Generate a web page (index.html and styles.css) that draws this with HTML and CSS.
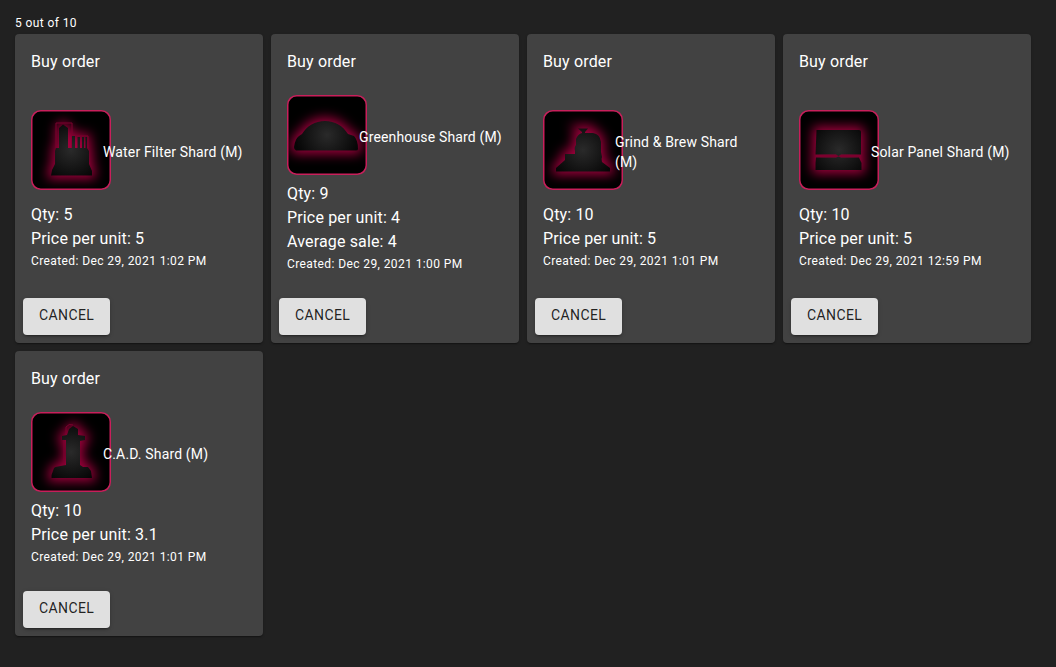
FILE: index.html
```html
<!DOCTYPE html>
<html lang="en">
<head>
<meta charset="utf-8">
<meta name="viewport" content="width=device-width, initial-scale=1">
<title>Orders</title>
<link rel="stylesheet" href="styles.css">
</head>
<body>
<svg class="defs" width="0" height="0" aria-hidden="true">
  <defs>
    <filter id="halo" x="-60%" y="-60%" width="220%" height="220%" color-interpolation-filters="sRGB"><feGaussianBlur stdDeviation="6"/></filter>
    <filter id="soft" x="-20%" y="-20%" width="140%" height="140%" color-interpolation-filters="sRGB"><feGaussianBlur stdDeviation="0.6"/></filter>
    <radialGradient id="body" gradientUnits="userSpaceOnUse" cx="40" cy="40" r="32">
      <stop offset="0" stop-color="#2a2a2a"/><stop offset="1" stop-color="#060606"/>
    </radialGradient>
    <path id="filter-shape" d="M20 65.5 L21 60 L24 54 V41 L25 38 H28 V18 L32 14.500 L37 18 V38 H41 V26 H44 V38 H46.500 V27 H49 V38 H51 V27 H53 V38 H54.500 V27 H56 V38 L58 41 V54 L61 61 V65.5 Z"/>
    <path id="greenhouse-shape" d="M9 55.5 Q7 55 7 52 Q8 44 12 41 L15 39 C20 31 28 26 38 26 C48 26 56 31 61 39 L67 41 Q71 45 71 54 Q71 55.500 69 55.500 Z"/>
    <path id="grind-shape" d="M13 61.5 V58 L22 50 V44 H32 V41 Q31 37 33 35 V29 Q35 24 39 23 V22 L35 18.500 H45 L42 22 V23 H50 Q57 24 58 32 V42 L59 47 Q58 49 59 52 L67 58 V61.500 Z"/>
    <path id="solar-shape" d="M17.500 20 H60 Q62 20 62 22 V44.500 H42 L39.500 46 L37 44.500 H16.500 Z M17 47.500 H37 L39.500 46.500 L42 47.500 H60 L62.500 53 V60 H16.500 V53 Z"/>
    <path id="cad-shape" d="M20.500 66 V63 L23 56 Q24 54.500 27 54.500 L35 53 V28 H31 V24 L36 23 L38 17 L42 14 L47 17 V23 L54 24 V28 L49 29 V53 L52 55 H57 L60 59 L61 66 Z"/>
  </defs>
</svg>

<main class="page">
  <p class="count">5 out of 10</p>
  <div class="orders">

    <article class="card">
      <h2 class="card-title">Buy order</h2>
      <div class="card-content">
        <div class="item">
          <svg class="item-icon" viewBox="0 0 80 80" aria-hidden="true">
            <rect class="tile" x="0.75" y="0.75" width="78.5" height="78.5" rx="9"/>
            <use class="halo" href="#filter-shape"/>
            <path class="wire" d="M25 38V13H41V25M41 38V26H57V38"/>
            <use class="shape" href="#filter-shape"/>
          </svg>
          <span class="item-name">Water Filter Shard (M)</span>
        </div>
        <div class="details">
          <p class="line">Qty: 5</p>
          <p class="line">Price per unit: 5</p>
          <p class="created">Created: Dec 29, 2021 1:02 PM</p>
        </div>
      </div>
      <div class="actions"><button class="button" type="button">CANCEL</button></div>
    </article>

    <article class="card">
      <h2 class="card-title">Buy order</h2>
      <div class="card-content">
        <div class="item">
          <svg class="item-icon" viewBox="0 0 80 80" aria-hidden="true">
            <rect class="tile" x="0.75" y="0.75" width="78.5" height="78.5" rx="9"/>
            <use class="halo" href="#greenhouse-shape"/>
            <use class="shape" href="#greenhouse-shape"/>
          </svg>
          <span class="item-name">Greenhouse Shard (M)</span>
        </div>
        <div class="details">
          <p class="line">Qty: 9</p>
          <p class="line">Price per unit: 4</p>
          <p class="line">Average sale: 4</p>
          <p class="created">Created: Dec 29, 2021 1:00 PM</p>
        </div>
      </div>
      <div class="actions"><button class="button" type="button">CANCEL</button></div>
    </article>

    <article class="card">
      <h2 class="card-title">Buy order</h2>
      <div class="card-content">
        <div class="item">
          <svg class="item-icon" viewBox="0 0 80 80" aria-hidden="true">
            <rect class="tile" x="0.75" y="0.75" width="78.5" height="78.5" rx="9"/>
            <use class="halo" href="#grind-shape"/>
            <use class="shape" href="#grind-shape"/>
          </svg>
          <span class="item-name">Grind &amp; Brew Shard (M)</span>
        </div>
        <div class="details">
          <p class="line">Qty: 10</p>
          <p class="line">Price per unit: 5</p>
          <p class="created">Created: Dec 29, 2021 1:01 PM</p>
        </div>
      </div>
      <div class="actions"><button class="button" type="button">CANCEL</button></div>
    </article>

    <article class="card">
      <h2 class="card-title">Buy order</h2>
      <div class="card-content">
        <div class="item">
          <svg class="item-icon" viewBox="0 0 80 80" aria-hidden="true">
            <rect class="tile" x="0.75" y="0.75" width="78.5" height="78.5" rx="9"/>
            <use class="halo" href="#solar-shape"/>
            <path class="seam" d="M17 46H62"/>
            <use class="shape" href="#solar-shape"/>
          </svg>
          <span class="item-name">Solar Panel Shard (M)</span>
        </div>
        <div class="details">
          <p class="line">Qty: 10</p>
          <p class="line">Price per unit: 5</p>
          <p class="created">Created: Dec 29, 2021 12:59 PM</p>
        </div>
      </div>
      <div class="actions"><button class="button" type="button">CANCEL</button></div>
    </article>

    <article class="card">
      <h2 class="card-title">Buy order</h2>
      <div class="card-content">
        <div class="item">
          <svg class="item-icon" viewBox="0 0 80 80" aria-hidden="true">
            <rect class="tile" x="0.75" y="0.75" width="78.5" height="78.5" rx="9"/>
            <use class="halo" href="#cad-shape"/>
            <path class="wire" d="M33 54V28M35 23V15Q38 11 42 13"/>
            <use class="shape" href="#cad-shape"/>
          </svg>
          <span class="item-name">C.A.D. Shard (M)</span>
        </div>
        <div class="details">
          <p class="line">Qty: 10</p>
          <p class="line">Price per unit: 3.1</p>
          <p class="created">Created: Dec 29, 2021 1:01 PM</p>
        </div>
      </div>
      <div class="actions"><button class="button" type="button">CANCEL</button></div>
    </article>

  </div>
</main>
</body>
</html>
```
FILE: styles.css
```css
* { box-sizing: border-box; }

body {
  margin: 0;
  background: #212121;
  color: #fff;
  font-family: Roboto, "Liberation Sans", sans-serif;
  font-size: 16px;
  line-height: 24px;
  letter-spacing: 0.00938em;
}

p, h2 { margin: 0; }

.defs { display: block; }

.page { padding: 13px 25px 16px 15px; }

.count {
  margin-bottom: 1px;
  font-size: 12px;
  line-height: 20px;
  letter-spacing: 0.03333em;
}

.orders {
  display: grid;
  grid-template-columns: repeat(auto-fill, minmax(240px, 1fr));
  gap: 8px;
}

.card {
  display: flex;
  flex-direction: column;
  border-radius: 4px;
  background: #424242;
  box-shadow: 0 2px 1px -1px rgba(0, 0, 0, .2), 0 1px 1px rgba(0, 0, 0, .14), 0 1px 3px rgba(0, 0, 0, .12);
}

.card-title {
  flex: 1 0 auto;
  padding: 16px;
  font-size: 16px;
  font-weight: 400;
}

.card-content {
  flex: 1 0 auto;
  display: flex;
  flex-direction: column;
  padding: 0 16px 16px;
}

.item {
  flex: 1 0 auto;
  display: flex;
  align-items: center;
  padding: 5px 0 3px;
}

.item-icon {
  flex: none;
  width: 80px;
  height: 80px;
  margin-bottom: 4px;
}

.item-name {
  z-index: 1;
  flex: 1;
  margin-left: -8px;
  font-size: 14px;
  line-height: 20px;
  letter-spacing: 0.01071em;
}

.details {
  flex: 1 0 auto;
  display: flex;
  flex-direction: column;
  justify-content: center;
}

.created {
  font-size: 12px;
  line-height: 20px;
  letter-spacing: 0.03333em;
}

.actions {
  display: flex;
  padding: 8px;
}

.button {
  padding: 5px 16px 8px;
  border: 0;
  border-radius: 4px;
  background: #e0e0e0;
  color: rgba(0, 0, 0, .87);
  font: 400 14px/24px Roboto, "Liberation Sans", sans-serif;
  letter-spacing: 0.02857em;
  box-shadow: 0 3px 1px -2px rgba(0, 0, 0, .2), 0 2px 2px rgba(0, 0, 0, .14), 0 1px 5px rgba(0, 0, 0, .12);
  cursor: pointer;
}

.button:hover { background: #d5d5d5; }

.tile {
  fill: #000;
  stroke: #c91f5b;
  stroke-width: 1.5;
}

.halo {
  fill: #a0003c;
  stroke: #a0003c;
  stroke-width: 7;
  filter: url(#halo);
}

.wire {
  fill: none;
  stroke: #7d002e;
  stroke-width: 1;
}

.seam {
  stroke: #7d002e;
  stroke-width: 3;
}

.shape {
  fill: url(#body);
  stroke: none;
  filter: url(#soft);
}
```
